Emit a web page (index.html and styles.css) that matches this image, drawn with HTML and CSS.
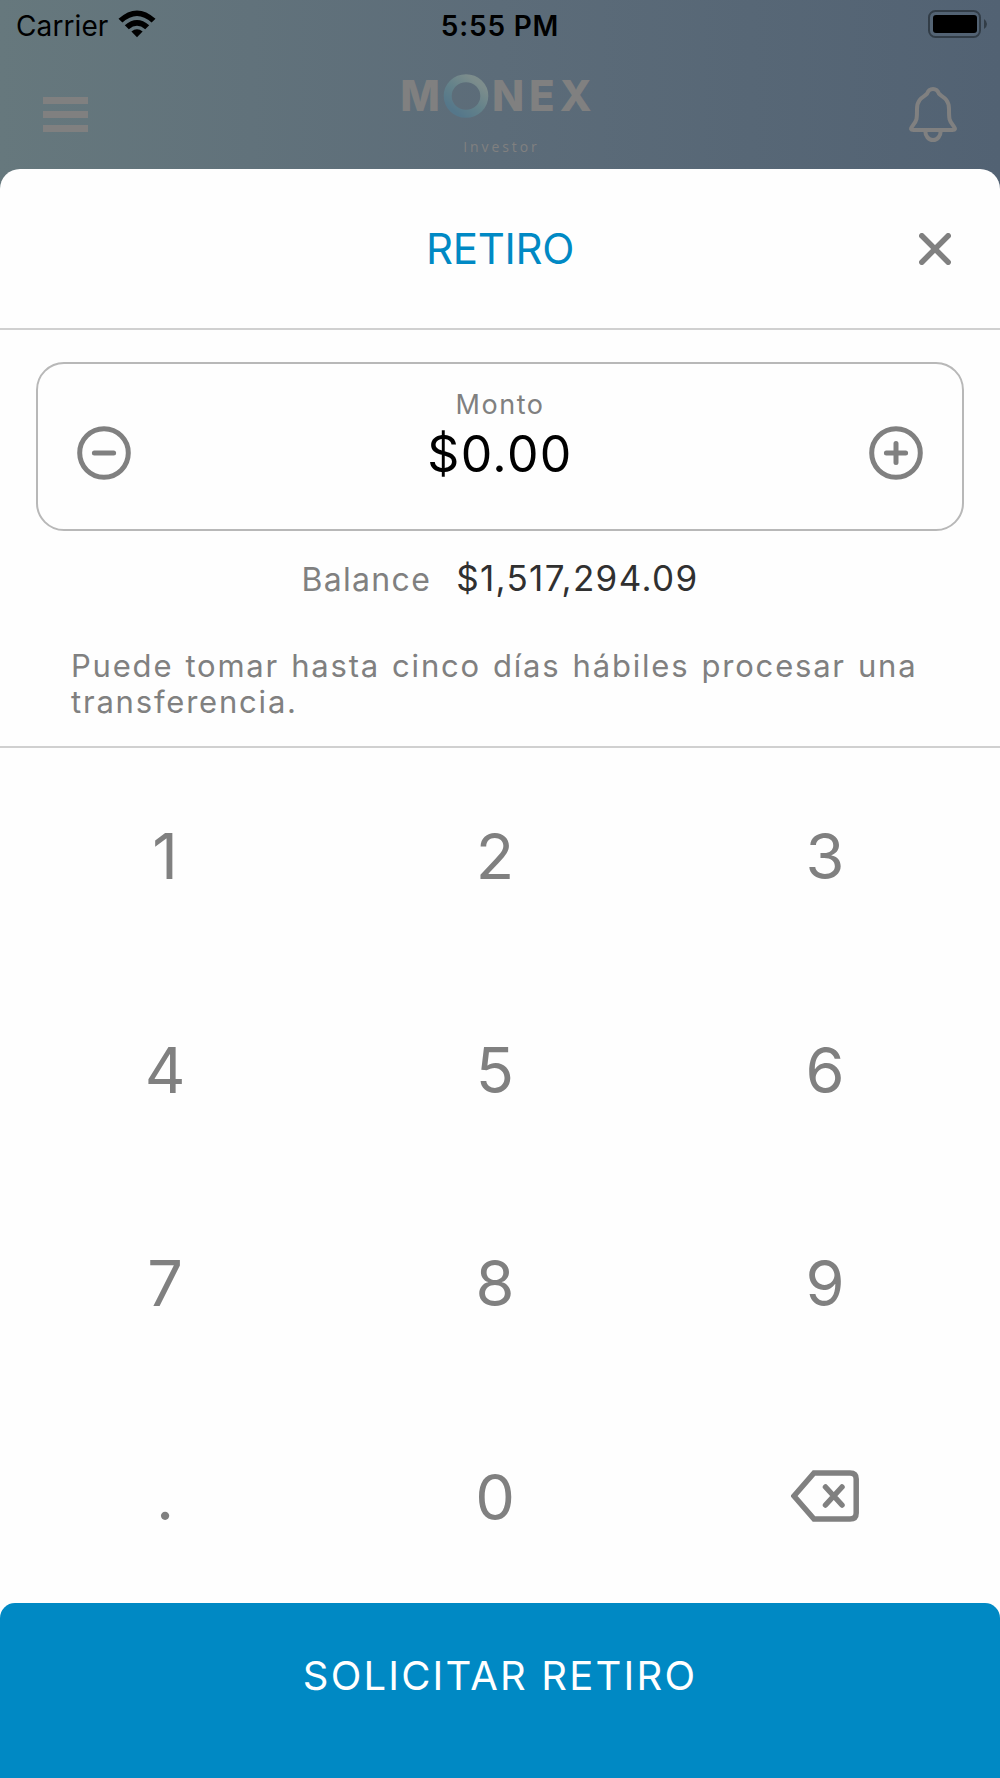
FILE: index.html
```html
<!DOCTYPE html>
<html lang="es">
<head>
    <meta charset="UTF-8">
    <title>Monex Investor - Retiro</title>
    <link rel="stylesheet" href="styles.css">
</head>
<body>
    <header>
        <div class="statusBar">
            <div class="carrier">
                <span>Carrier</span>
                <svg width="38" height="28" viewBox="0 0 38 28">
                    <path d="M0.5 8.8 Q19 -8 37.5 8.8 L33.6 12.6 Q19 -0.6 4.4 12.6 Z"/>
                    <path d="M6.8 15.2 Q19 4.6 31.2 15.2 L27.2 19.2 Q19 12.4 10.8 19.2 Z"/>
                    <path d="M13.4 21.6 Q19 16.8 24.6 21.6 L19 27.2 Z"/>
                </svg>
            </div>
            <span class="hora">5:55 PM</span>
            <svg class="bateria" width="60" height="28" viewBox="0 0 60 28">
                <rect x="1" y="1" width="51" height="26" rx="6.5" fill="none" stroke="#323d47" stroke-width="2"/>
                <rect x="5" y="5" width="44" height="18" rx="3"/>
                <path d="M56 9 Q59 11 59 14 Q59 17 56 19 Z" fill="#323d47"/>
            </svg>
        </div>
        <div class="navBar">
            <div class="menu">
                <span></span>
                <span></span>
                <span></span>
            </div>
            <div class="logo">
                <div class="marca">
                    <span class="letraM">M</span>
                    <svg width="46" height="44" viewBox="0 0 46 44">
                        <defs>
                            <linearGradient id="aro" x1="0.15" y1="0.9" x2="0.8" y2="0.1">
                                <stop offset="0" stop-color="#55778a"/>
                                <stop offset="0.5" stop-color="#64828a"/>
                                <stop offset="1" stop-color="#7d8d8c"/>
                            </linearGradient>
                        </defs>
                        <ellipse cx="23" cy="22" rx="18.3" ry="17.8" fill="none" stroke="url(#aro)" stroke-width="8"/>
                    </svg>
                    <span class="letrasNex">NEX</span>
                </div>
                <span class="investor">Investor</span>
            </div>
            <svg class="campana" width="48" height="56" viewBox="0 0 48 56">
                <path d="M24 2 C20.5 2 19 4 18 6.8 C16 9.5 8 11 8 22 C8 32 8 33.5 3.5 39 C1 42.2 2 43 4.5 43 H43.5 C46 43 47 42.2 44.5 39 C40 33.5 40 32 40 22 C40 11 32 9.5 30 6.8 C29 4 27.5 2 24 2 Z"/>
                <path d="M16.3 44 C16.3 49 19.5 53 24 53 C28.5 53 31.7 49 31.7 44"/>
            </svg>
        </div>
    </header>

    <main>
        <div class="titulo">
            <h1>RETIRO</h1>
            <svg class="cerrar" width="32" height="32" viewBox="0 0 32 32">
                <path d="M2.8 2.8 L29.2 29.2 M29.2 2.8 L2.8 29.2"/>
            </svg>
        </div>

        <section class="datos">
            <div class="monto">
                <svg class="icono" width="54" height="54" viewBox="0 0 54 54">
                    <circle cx="27" cy="27" r="24.3"/>
                    <path d="M17.4 27 H36.6"/>
                </svg>
                <div class="cantidad">
                    <label>Monto</label>
                    <span>$0.00</span>
                </div>
                <svg class="icono" width="54" height="54" viewBox="0 0 54 54">
                    <circle cx="27" cy="27" r="24.3"/>
                    <path d="M17.4 27 H36.6 M27 17.4 V36.6"/>
                </svg>
            </div>
            <div class="balance">
                <label>Balance</label>
                <span>$1,517,294.09</span>
            </div>
            <p class="aviso">Puede tomar hasta cinco días hábiles procesar una transferencia.</p>
        </section>

        <div class="teclado">
            <div>1</div>
            <div>2</div>
            <div>3</div>
            <div>4</div>
            <div>5</div>
            <div>6</div>
            <div>7</div>
            <div>8</div>
            <div>9</div>
            <div>.</div>
            <div>0</div>
            <div>
                <svg class="borrar" width="68" height="52" viewBox="0 0 68 52">
                    <path d="M23 3 H59 Q65.2 3 65.2 9 V43 Q65.2 49 59 49 H23 L3 26 Z"/>
                    <path d="M34.5 17 L51 35 M51 17 L34.5 35"/>
                </svg>
            </div>
        </div>

        <div class="boton">
            <span>SOLICITAR RETIRO</span>
        </div>
    </main>
</body>
</html>
```

FILE: styles.css
```css
html, body {
    margin: 0;
    height: 100%;
}
body {
    display: flex;
    flex-direction: column;
    height: 1778px;
    overflow: hidden;
    font-family: Inter, sans-serif;
    color: #808080;
    background: linear-gradient(90deg, #66787d 0, #5c6c79 500px, #526273 1000px);
}
header {
    height: 169px;
}
.statusBar {
    display: grid;
    grid-template-columns: 1fr auto 1fr;
    align-items: center;
    height: 50px;
    color: black;
    font-size: 28px;
}
.carrier {
    display: flex;
    align-items: center;
    gap: 10px;
    padding-left: 16px;
    letter-spacing: 0.1px;
}
.carrier span, .hora {
    padding-top: 2px;
}
.carrier svg {
    margin-bottom: 3px;
}
.hora {
    font-weight: 600;
    letter-spacing: 0.8px;
}
.bateria {
    justify-self: end;
    margin-right: 12px;
    margin-bottom: 2px;
}
.navBar {
    display: flex;
    justify-content: space-between;
    height: 119px;
    padding: 0 43px;
}
.menu {
    display: flex;
    flex-direction: column;
    gap: 7px;
    margin-top: 47px;
    width: 45px;
}
.menu span {
    height: 7px;
    background: #808080;
}
.logo {
    display: flex;
    flex-direction: column;
    align-items: center;
    margin-top: 24px;
    color: #808080;
}
.marca {
    display: flex;
    align-items: center;
    gap: 3px;
    height: 44px;
    font-size: 42px;
    font-weight: 800;
    line-height: 44px;
}
.letrasNex {
    letter-spacing: 5px;
}
.investor {
    margin-top: 19px;
    padding-left: 6px;
    font-family: "Open Sans", sans-serif;
    font-size: 14px;
    line-height: 20px;
    letter-spacing: 2.9px;
}
.campana {
    margin-top: 37px;
    fill: none;
    stroke: #808080;
    stroke-width: 4;
}
main {
    display: flex;
    flex-direction: column;
    flex: 1;
    background: #fefefe;
    border-radius: 20px 20px 0 0;
}
.titulo {
    display: grid;
    grid-template-columns: 1fr auto 1fr;
    align-items: center;
    height: 159px;
    border-bottom: 2px solid #d0d0d0;
}
.titulo h1 {
    grid-column: 2;
    margin: 0;
    font-size: 42px;
    font-weight: 400;
    letter-spacing: -0.3px;
    color: #0089c4;
}
.cerrar {
    justify-self: end;
    margin-right: 49px;
    fill: none;
    stroke: #808080;
    stroke-width: 5.5;
    stroke-linecap: round;
}
.datos {
    box-sizing: border-box;
    height: 418px;
    padding: 32px 36px 0;
    border-bottom: 2px solid #d0d0d0;
}
.monto {
    box-sizing: border-box;
    display: flex;
    justify-content: space-between;
    height: 169px;
    padding: 0 39px;
    border: 2px solid #b8b8b8;
    border-radius: 28px;
}
.icono {
    margin-top: 62px;
    fill: none;
    stroke: #808080;
    stroke-width: 5;
    stroke-linecap: round;
}
.cantidad {
    display: flex;
    flex-direction: column;
    align-items: center;
    padding-top: 24px;
}
.cantidad label {
    font-size: 27px;
    line-height: 33px;
    letter-spacing: 1.5px;
}
.cantidad span {
    margin-top: 3px;
    font-size: 50px;
    line-height: 60px;
    letter-spacing: 1.4px;
    color: black;
}
.balance {
    display: flex;
    justify-content: center;
    align-items: baseline;
    gap: 25px;
    margin-top: 24px;
    line-height: 46px;
}
.balance label {
    font-size: 32px;
    letter-spacing: 1.3px;
}
.balance span {
    font-size: 35px;
    letter-spacing: 1.35px;
    color: #303030;
}
.aviso {
    margin: 45px 10px 0 35px;
    font-size: 31px;
    line-height: 36px;
    letter-spacing: 1.8px;
    word-spacing: 1.6px;
}
.teclado {
    display: grid;
    grid-template-columns: repeat(3, 330px);
    grid-template-rows: repeat(4, 1fr);
    flex: 1;
    font-size: 63px;
}
.teclado div {
    display: flex;
    justify-content: center;
    align-items: center;
    padding-top: 2px;
}
.borrar {
    margin-bottom: 2px;
    fill: none;
    stroke: #808080;
    stroke-width: 5.5;
    stroke-linecap: round;
}
.boton {
    display: flex;
    justify-content: center;
    box-sizing: border-box;
    height: 175px;
    padding-top: 48px;
    font-size: 40px;
    line-height: 50px;
    letter-spacing: 2.2px;
    color: white;
    background: #0089c4;
    border-radius: 15px 15px 0 0;
}
```
